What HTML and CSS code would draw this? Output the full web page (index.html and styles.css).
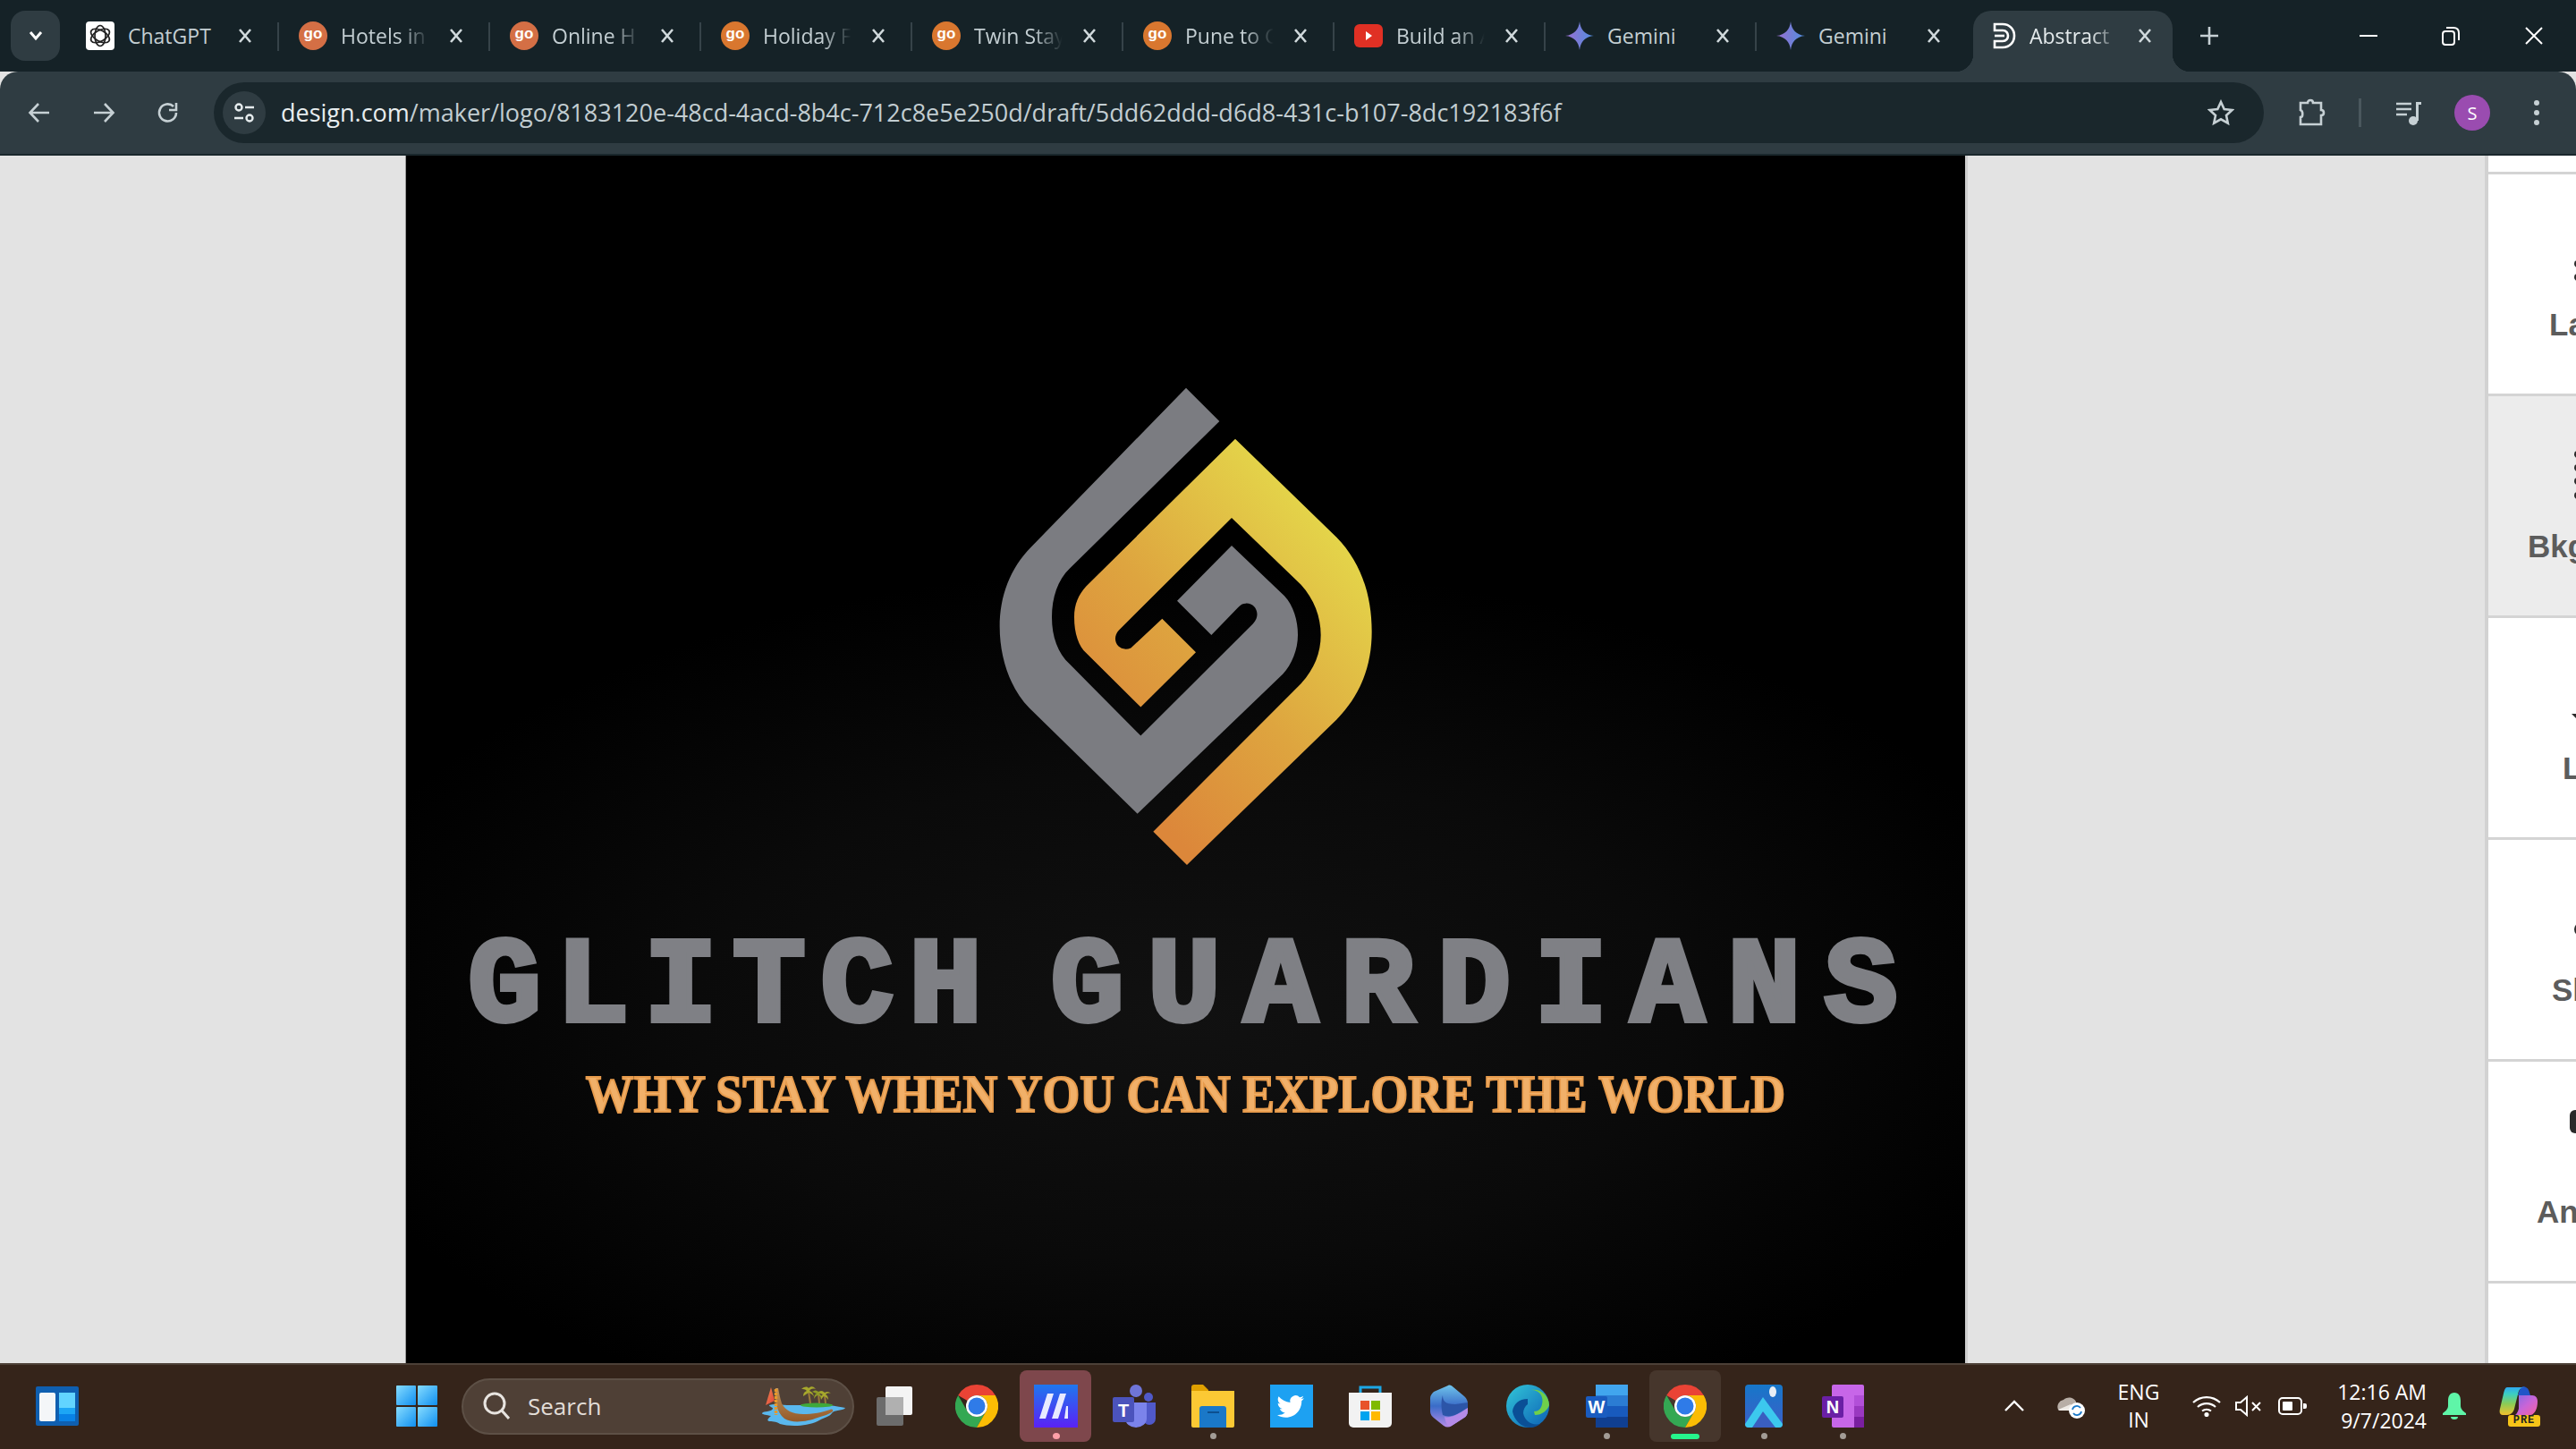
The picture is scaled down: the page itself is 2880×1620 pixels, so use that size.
FILE: index.html
```html
<!DOCTYPE html>
<html lang="en">
<head>
<meta charset="utf-8">
<title>Abstract</title>
<link rel="stylesheet" href="styles.css">
</head>
<body>
<svg class="defs" width="0" height="0">
  <defs>
    <symbol id="chrome" viewBox="0 0 48 48">
      <path fill="#ea4335" d="M24 0A24 24 0 0 1 44.8 12H24a12 12 0 0 0-10.4 6L3.2 12A24 24 0 0 1 24 0z"/>
      <path fill="#34a853" d="M3.2 12A24 24 0 0 0 24 48L34.4 30A12 12 0 0 1 13.6 30z"/>
      <path fill="#fbbc04" d="M44.8 12H24A12 12 0 0 1 34.4 30L24 48A24 24 0 0 0 44.8 12z"/>
      <circle cx="24" cy="24" r="12" fill="#fff"/><circle cx="24" cy="24" r="9.5" fill="#2f7be8"/>
    </symbol>
    <symbol id="gemini" viewBox="0 0 32 32">
      <path fill="url(#gem)" d="M16 0C17 9 22 15 32 16C22 17 17 23 16 32C15 23 10 17 0 16C10 15 15 9 16 0z"/>
    </symbol>
    <symbol id="close" viewBox="0 0 24 24">
      <path d="M6 5l12 14M18 5L6 19" fill="none" stroke="#d0d9dc" stroke-width="2.6"/>
    </symbol>
    <linearGradient id="gem" x1="0" y1="0.5" x2="1" y2="0.5"><stop offset="0" stop-color="#9a6ed0"/><stop offset="1" stop-color="#4f8fe0"/></linearGradient>
    <linearGradient id="gold" gradientUnits="userSpaceOnUse" x1="500" y1="1250" x2="1250" y2="500"><stop offset="0" stop-color="#dc873a"/><stop offset="0.45" stop-color="#dea53f"/><stop offset="1" stop-color="#e4d64a"/></linearGradient>
    <linearGradient id="win" x1="0" y1="0" x2="1" y2="1"><stop offset="0" stop-color="#86dcff"/><stop offset="1" stop-color="#0f8ff0"/></linearGradient>
    <linearGradient id="maker" x1="0" y1="0" x2="0" y2="1"><stop offset="0" stop-color="#1f77ee"/><stop offset="1" stop-color="#5a22f5"/></linearGradient>
    <linearGradient id="edge" x1="0" y1="0" x2="1" y2="1"><stop offset="0" stop-color="#32c7d8"/><stop offset="1" stop-color="#0c5fb5"/></linearGradient>
    <linearGradient id="copi" x1="0" y1="0" x2="0" y2="1"><stop offset="0" stop-color="#2fa8f0"/><stop offset="0.25" stop-color="#3ccfc0"/><stop offset="0.6" stop-color="#8ccc55"/><stop offset="1" stop-color="#f2c02e"/></linearGradient>
    <linearGradient id="copi2" x1="0" y1="0" x2="1" y2="1"><stop offset="0" stop-color="#7a6ae8"/><stop offset="0.5" stop-color="#c865d8"/><stop offset="1" stop-color="#f860a0"/></linearGradient>
    <linearGradient id="bing" x1="0" y1="0" x2="0" y2="1"><stop offset="0" stop-color="#6fc3ea"/><stop offset="0.5" stop-color="#3a6cc8"/><stop offset="1" stop-color="#b58be8"/></linearGradient>
    <linearGradient id="photo" x1="0" y1="0" x2="0" y2="1"><stop offset="0" stop-color="#1677c9"/><stop offset="1" stop-color="#3d5fc8"/></linearGradient>
    <linearGradient id="hull" x1="0" y1="0" x2="0" y2="1"><stop offset="0" stop-color="#c0935a"/><stop offset="1" stop-color="#93592a"/></linearGradient>
    <linearGradient id="flag" x1="0" y1="0" x2="1" y2="1"><stop offset="0" stop-color="#f08a50"/><stop offset="1" stop-color="#e0403a"/></linearGradient>
  </defs>
</svg>

<div class="app">
  <header class="tabstrip">
    <button class="tab-search"><svg width="16" height="12" viewBox="0 0 16 12"><path d="M2 2l6 7 6-7" fill="none" stroke="#fff" stroke-width="3"/></svg></button>
    <div class="tabs">
      <div class="tab sep tab-first">
        <span class="fav fav-white"><svg width="26" height="26" viewBox="0 0 26 26" fill="none" stroke="#222" stroke-width="1.7"><ellipse cx="13" cy="13" rx="6" ry="11.500"/><ellipse cx="13" cy="13" rx="6" ry="11.500" transform="rotate(60 13 13)"/><ellipse cx="13" cy="13" rx="6" ry="11.500" transform="rotate(120 13 13)"/></svg></span>
        <span class="title">ChatGPT</span>
        <svg class="x" width="24" height="24"><use href="#close"/></svg>
      </div>
      <div class="tab sep"><span class="fav go go-a">go</span><span class="title fade">Hotels in</span><svg class="x" width="24" height="24"><use href="#close"/></svg></div>
      <div class="tab sep"><span class="fav go go-a">go</span><span class="title fade">Online H</span><svg class="x" width="24" height="24"><use href="#close"/></svg></div>
      <div class="tab sep"><span class="fav go">go</span><span class="title fade">Holiday F</span><svg class="x" width="24" height="24"><use href="#close"/></svg></div>
      <div class="tab sep"><span class="fav go">go</span><span class="title fade">Twin Stay</span><svg class="x" width="24" height="24"><use href="#close"/></svg></div>
      <div class="tab sep"><span class="fav go">go</span><span class="title fade">Pune to G</span><svg class="x" width="24" height="24"><use href="#close"/></svg></div>
      <div class="tab sep">
        <span class="fav"><svg width="32" height="26" viewBox="0 0 32 26"><rect width="32" height="26" rx="6" fill="#e03024"/><path d="M13 8l7 5-7 5z" fill="#fff"/></svg></span>
        <span class="title fade">Build an A</span><svg class="x" width="24" height="24"><use href="#close"/></svg>
      </div>
      <div class="tab sep"><span class="fav"><svg width="32" height="32"><use href="#gemini"/></svg></span><span class="title">Gemini</span><svg class="x" width="24" height="24"><use href="#close"/></svg></div>
      <div class="tab"><span class="fav"><svg width="32" height="32"><use href="#gemini"/></svg></span><span class="title">Gemini</span><svg class="x" width="24" height="24"><use href="#close"/></svg></div>
      <div class="tab active">
        <span class="fav"><svg width="26" height="30" viewBox="0 0 26 30" fill="none" stroke="#fff" stroke-width="2.600"><path d="M2 2h9c8 0 13 6 13 13s-5 13-13 13H2v-7h9c4 0 6-3 6-6s-2-6-6-6H2z"/><path d="M2 15h11"/></svg></span>
        <span class="title fade">Abstract</span><svg class="x" width="24" height="24"><use href="#close"/></svg>
      </div>
    </div>
    <svg class="newtab" width="24" height="24" viewBox="0 0 24 24"><path d="M12 2v20M2 12h20" stroke="#c6d0d4" stroke-width="2.6"/></svg>
    <div class="winctl">
      <svg width="20" height="4" viewBox="0 0 20 4"><path d="M0 2h20" stroke="#fff" stroke-width="2"/></svg>
      <svg width="22" height="22" viewBox="0 0 22 22" fill="none" stroke="#fff" stroke-width="2"><rect x="2" y="6" width="13" height="15" rx="3"/><path d="M6 2h8c4 0 6 2 6 6v8"/></svg>
      <svg width="22" height="22" viewBox="0 0 22 22"><path d="M2 2l18 18M20 2L2 20" stroke="#fff" stroke-width="2"/></svg>
    </div>
  </header>

  <nav class="toolbar">
    <svg class="nav-i" width="26" height="26" viewBox="0 0 26 26" fill="none" stroke="#c6d0d4" stroke-width="2.6"><path d="M24 13H3M12 3L2.5 13l9.5 10"/></svg>
    <svg class="nav-i" width="26" height="26" viewBox="0 0 26 26" fill="none" stroke="#c6d0d4" stroke-width="2.6"><path d="M2 13h21M14 3l9.500 10L14 23"/></svg>
    <svg class="nav-i" width="26" height="26" viewBox="0 0 26 26" fill="none" stroke="#c6d0d4" stroke-width="2.6"><path d="M22 13a9.500 9.500 0 1 1-3-7"/><path d="M22 2v8h-8" stroke-width="2.6"/></svg>
    <div class="omnibox">
      <span class="site"><svg width="24" height="24" viewBox="0 0 24 24" fill="none" stroke="#e6ecee" stroke-width="2.4"><circle cx="6" cy="6" r="3.500"/><path d="M13 6h10M1 18h10"/><circle cx="18" cy="18" r="3.500"/></svg></span>
      <span class="url"><span class="domain">design.com</span>/maker/logo/8183120e-48cd-4acd-8b4c-712c8e5e250d/draft/5dd62ddd-d6d8-431c-b107-8dc192183f6f</span>
      <svg class="star" width="30" height="30" viewBox="0 0 30 30"><path d="M15 3l3.700 8 8.800 1-6.500 6 1.800 8.700L15 22.300l-7.800 4.400L9 18l-6.500-6 8.800-1z" fill="none" stroke="#c6d0d4" stroke-width="2.600"/></svg>
    </div>
    <div class="tools">
      <svg class="t-ext" width="32" height="32" viewBox="0 0 32 32" fill="none" stroke="#c6d0d4" stroke-width="2.6"><path d="M3 5h8c0-4 6-4 6 0h9v8c4 0 4 6 0 6v10H3v-8c3 0 3-7 0-8z"/></svg>
      <span class="t-sep"></span>
      <svg class="t-med" width="30" height="28" viewBox="0 0 30 28"><path d="M1 4h17M1 10h17M1 16h12" stroke="#c6d0d4" stroke-width="2.6"/><path d="M23 2h6v3h-3v18h-3z" fill="#c6d0d4"/><circle cx="20" cy="23" r="5" fill="#c6d0d4"/></svg>
      <span class="avatar">S</span>
      <svg class="t-more" width="8" height="30" viewBox="0 0 8 30"><circle cx="4" cy="4" r="3" fill="#c6d0d4"/><circle cx="4" cy="15" r="3" fill="#c6d0d4"/><circle cx="4" cy="26" r="3" fill="#c6d0d4"/></svg>
    </div>
  </nav>

  <main class="stage">
    <div class="gutter"></div>
    <section class="canvas">
      <svg class="logo" width="500" height="570" viewBox="0 0 1500 1568" preserveAspectRatio="none">
        <path fill="#7b7c81" d="M735 65L847 168L345 620C305 655 285 710 285 770C285 830 305 880 345 915L583 1135L960 790C990 760 965 725 935 728C925 728 918 732 910 740L820 825L705 720L888 550L1065 705C1095 735 1110 780 1110 825C1110 870 1090 915 1060 945L572 1375L210 1050C145 990 110 895 110 800C110 705 145 620 215 555z"/>
        <path fill="url(#gold)" d="M900 222L1240 525C1320 600 1358 700 1358 815C1358 920 1320 1010 1240 1085L738 1532L625 1430L1120 975C1165 930 1187 880 1187 825C1187 770 1165 715 1120 670L888 465L510 810C480 840 510 880 550 865L655 775L768 878L583 1047L400 880C375 860 360 820 360 770C360 730 375 700 400 675z"/>
      </svg>
      <h1 class="brand"><span class="w-first">GLITCH</span> <span class="w-second">GUARDIANS</span></h1>
      <p class="tagline">WHY STAY WHEN YOU CAN EXPLORE THE WORLD</p>
    </section>
    <div class="gutter gutter-r"></div>
    <aside class="panel">
      <div class="panel-top"></div>
      <div class="prow">
        <svg class="picon" width="98" height="148"><circle cx="100" cy="100" r="4" class="ink"/><circle cx="100" cy="115" r="4" class="ink"/></svg>
        <span class="plabel l-la">La</span>
      </div>
      <div class="prow prow-on">
        <svg class="picon" width="98" height="148"><circle cx="100" cy="65" r="4" class="ink"/><circle cx="100" cy="80" r="4" class="ink"/><circle cx="100" cy="95" r="4" class="ink"/><circle cx="100" cy="111" r="4" class="ink"/></svg>
        <span class="plabel l-bkg">Bkg</span>
      </div>
      <div class="prow">
        <svg class="picon" width="98" height="148"><path d="M93 107h6v6z" class="ink"/></svg>
        <span class="plabel l-l">L</span>
      </div>
      <div class="prow">
        <svg class="picon" width="98" height="148"><circle cx="104" cy="100" r="8" class="ink"/></svg>
        <span class="plabel l-sl">Sl</span>
      </div>
      <div class="prow">
        <svg class="picon" width="98" height="148"><rect x="91" y="54" width="20" height="26" rx="6" class="ink"/></svg>
        <span class="plabel l-an">An</span>
      </div>
    </aside>
  </main>

  <footer class="taskbar">
    <svg class="widgets" width="48" height="44" viewBox="0 0 48 44"><rect width="48" height="44" rx="2" fill="#0f5fb0"/><rect x="4" y="7" width="18" height="32" rx="2" fill="#f4f6f8"/><rect x="26" y="7" width="18" height="20" fill="#62d4ff"/><rect x="26" y="24" width="18" height="8" fill="#1ca6f5"/><rect x="26" y="31" width="18" height="8" fill="#0882e6"/></svg>
    <svg class="winlogo" width="46" height="46" viewBox="0 0 46 46" fill="url(#win)"><rect width="22" height="22" rx="1"/><rect x="24" width="22" height="22" rx="1"/><rect y="24" width="22" height="22" rx="1"/><rect x="24" y="24" width="22" height="22" rx="1"/></svg>
    <div class="search">
      <svg width="30" height="32" viewBox="0 0 30 32" fill="none" stroke="#e8e4e0" stroke-width="3"><circle cx="13" cy="13" r="11"/><path d="M21 21l8 9"/></svg>
      <span class="search-t">Search</span>
      <svg class="boat" width="95" height="50" viewBox="0 0 95 50">
        <path fill="#5ab8ee" d="M8 24C14 22 20 24 28 24H70C78 24 82 25 93 27C92 30 80 29 78 33C76 37 68 38 62 42C50 48 30 48 20 45C16 42 10 42 8 42C4 41 8 38 10 36C4 35 -1 34 0 33C2 30 10 32 12 28C12 26 8 26 8 24z"/>
        <ellipse cx="61" cy="24" rx="18" ry="2.500" fill="#3fa83a"/>
        <path d="M54 22L52 9M64 22L63 11M71 22L70 13" stroke="#9a7a3a" stroke-width="2" fill="none"/>
        <path d="M44 6C48 3 50 3 52 5C55 2 58 3 60 6C56 5 54 6 53 8C56 9 57 11 58 14C55 11 53 10 52 10C50 11 48 13 46 14C46 11 47 9 50 8C48 6 46 6 44 6z" fill="#a7a82c"/>
        <path d="M56 9C59 7 61 7 63 9C66 7 68 8 70 10C67 9 65 10 64 11C66 12 66 14 67 17C64 13 63 13 62 13C60 14 59 15 58 17C58 14 59 12 61 11C59 10 58 10 56 9z" fill="#8f9a26"/>
        <path d="M63 10C66 8 68 8 70 10C73 8 75 9 77 11C74 10 72 11 71 12C73 13 74 15 74 18C72 15 70 14 69 14C68 15 67 16 66 18C65 15 66 13 68 12C66 11 65 11 63 10z" fill="#a7a82c"/>
        <path fill="url(#hull)" d="M15 5C14 18 16 32 25 39C34 45 52 42 62 38C68 36 76 34 79 31C80 29 78 28 76 29C68 32 56 34 46 34C34 34 26 30 22 22C20 16 19 10 18 5z"/>
        <path fill="url(#flag)" d="M10 4L4 24L14 19z"/>
        <path d="M15.500 6V35" stroke="#e8982a" stroke-width="3.500" stroke-dasharray="3 1"/>
      </svg>
    </div>
    <div class="apps">
      <div class="app-slot"><svg width="48" height="44" viewBox="0 0 48 44"><rect y="12" width="30" height="32" rx="2" fill="#6c6c6c"/><rect x="10" width="30" height="32" rx="2" fill="#f4f4f4"/><rect x="10" y="12" width="20" height="20" fill="#b0b0b0"/></svg></div>
      <div class="app-slot"><svg width="48" height="48"><use href="#chrome"/></svg></div>
      <div class="app-slot app-maker">
        <svg width="49" height="48" viewBox="0 0 49 48"><rect width="49" height="48" fill="url(#maker)"/><path d="M6 38L15 10h7L13 38zM20 38L29 10h7L27 38zM34 38L36 24 38 24V38z" fill="#e8eaff"/></svg>
        <i class="pip pip-pink"></i>
      </div>
      <div class="app-slot"><svg width="48" height="48" viewBox="0 0 48 48"><circle cx="26" cy="7" r="7" fill="#6f75d8"/><circle cx="40" cy="14" r="5" fill="#5059c9"/><path d="M34 20h14v18a7 7 0 0 1-14 0z" fill="#5059c9"/><path d="M14 20h24v18a12 10 0 0 1-24 0z" fill="#7b83eb"/><rect y="14" width="24" height="28" rx="2" fill="#4b53bc"/><text x="12" y="36" class="ico-t">T</text></svg></div>
      <div class="app-slot">
        <svg width="48" height="48" viewBox="0 0 48 48"><path d="M0 3a3 3 0 0 1 3-3h10l6 6v20H0z" fill="#e0a000"/><path d="M0 7h48v39a2 2 0 0 1-2 2H2a2 2 0 0 1-2-2z" fill="#fcc934"/><path d="M12 24h24a3 3 0 0 1 3 3v21H9V27a3 3 0 0 1 3-3z" fill="#1a78c8"/><path d="M18 31h13" stroke="#0c4f8f" stroke-width="2"/></svg>
        <i class="pip"></i>
      </div>
      <div class="app-slot"><svg width="48" height="48" viewBox="0 0 48 48"><rect width="48" height="48" fill="#1da1f2"/><path d="M38 15c-1 .6-2.500 1-3.600 1.100 1.300-.8 2.300-2 2.700-3.400-1.200.7-2.600 1.200-4 1.500a6.200 6.200 0 0 0-10.600 5.700c-5.200-.3-9.800-2.800-12.900-6.600-1.700 2.900-.8 6.500 1.900 8.300-1 0-2-.3-2.800-.8 0 3 2.100 5.600 5 6.200-.9.200-1.900.3-2.800.1.800 2.500 3.100 4.300 5.800 4.300A12.500 12.500 0 0 1 8 34c2.800 1.800 6 2.800 9.500 2.800 11.600 0 18-9.800 17.700-18.500 1.200-.9 2.200-2 2.800-3.300z" fill="#fff"/></svg></div>
      <div class="app-slot"><svg width="48" height="48" viewBox="0 0 48 48"><path d="M13 9V3h22v6" fill="none" stroke="#1ca7e6" stroke-width="3"/><path d="M0 9h48v34a5 5 0 0 1-5 5H5a5 5 0 0 1-5-5z" fill="#f2f2f2"/><rect x="13" y="18" width="10" height="10" fill="#e8532a"/><rect x="25" y="18" width="10" height="10" fill="#7fba00"/><rect x="13" y="30" width="10" height="10" fill="#00a4ef"/><rect x="25" y="30" width="10" height="10" fill="#ffb900"/></svg></div>
      <div class="app-slot"><svg width="42" height="48" viewBox="0 0 42 48"><path d="M20 1C22 0 24 1 26 3L38 13C41 16 42 18 42 22V30C42 33 40 36 38 37L24 46C21 48 18 48 15 46L5 38C2 36 0 33 0 30V15C0 12 2 10 4 8z" fill="url(#bing)"/><path d="M14 12C14 18 16 22 28 22L42 20V26L30 33C24 36 18 36 14 34C12 26 12 18 14 12z" fill="#2c55a8"/><path d="M16 36C22 38 30 34 42 26V30C42 33 40 36 38 37L24 46C21 48 18 46 16 36z" fill="#b58be8"/></svg></div>
      <div class="app-slot"><svg width="48" height="48" viewBox="0 0 48 48"><circle cx="24" cy="24" r="24" fill="url(#edge)"/><path d="M24 16c-10 0-16 6-17 14 2 10 10 18 20 18 5 0 8-2 11-4-10 2-17-3-19-12 0-4 2-8 5-10z" fill="#0a4f96"/><path d="M32 34c8 0 14-5 16-11C48 12 38 4 28 6c10 0 14 8 12 16-1 5-4 8-9 8z" fill="#6fd04a"/></svg></div>
      <div class="app-slot">
        <svg width="47" height="48" viewBox="0 0 47 48"><rect x="11" width="36" height="48" rx="2" fill="#2b7cd3"/><rect x="11" width="36" height="12" fill="#41a5ee"/><rect x="11" y="24" width="36" height="12" fill="#185abd"/><rect x="11" y="36" width="36" height="12" fill="#103f91"/><rect y="13" width="24" height="24" rx="2" fill="#1a5cc0"/><text x="12" y="32" class="ico-t">W</text></svg>
        <i class="pip"></i>
      </div>
      <div class="app-slot app-cur"><svg width="48" height="48"><use href="#chrome"/></svg><i class="pip pip-green"></i></div>
      <div class="app-slot">
        <svg width="42" height="48" viewBox="0 0 42 48"><rect width="42" height="48" rx="4" fill="url(#photo)"/><path d="M0 44L20 14l22 30v0a4 4 0 0 1-4 4H4a4 4 0 0 1-4-4z" fill="#3cc8ee"/><path d="M20 30L8 48h26z" fill="#3a5ec0"/><ellipse cx="31" cy="8" rx="4" ry="6" fill="#e8eef5"/></svg>
        <i class="pip"></i>
      </div>
      <div class="app-slot">
        <svg width="47" height="48" viewBox="0 0 47 48"><rect x="11" width="36" height="48" rx="2" fill="#c766e8"/><rect x="36" y="12" width="11" height="12" fill="#b24fd8"/><rect x="36" y="24" width="11" height="12" fill="#9a38c0"/><rect x="36" y="36" width="11" height="12" fill="#7a1fa0"/><rect y="13" width="24" height="24" rx="2" fill="#6a1fa5"/><text x="12" y="32" class="ico-t">N</text></svg>
        <i class="pip"></i>
      </div>
    </div>
    <div class="tray">
      <svg class="tr-chev" width="24" height="14" viewBox="0 0 24 14"><path d="M2 12L12 2l10 10" fill="none" stroke="#fff" stroke-width="2.400"/></svg>
      <svg class="tr-cloud" width="32" height="28" viewBox="0 0 32 28"><path d="M2 18a8 8 0 0 1 6-11 9 9 0 0 1 14 2v10H5a4 4 0 0 1-3-1z" fill="#b8aea6"/><path d="M2 18l14-6 6 7H5a4 4 0 0 1-3-1z" fill="#efebe6"/><circle cx="23" cy="19" r="9" fill="#fff"/><path d="M18 18a5 5 0 0 1 9-2M28 20a5 5 0 0 1-9 2" fill="none" stroke="#1a78c8" stroke-width="1.800"/></svg>
      <div class="tr-lang"><span>ENG</span><span>IN</span></div>
      <svg class="tr-wifi" width="32" height="24" viewBox="0 0 32 24" fill="none" stroke="#fff" stroke-width="2.200"><path d="M1 8a22 22 0 0 1 30 0M6 13a15 15 0 0 1 20 0M11 17.500a8 8 0 0 1 10 0"/><circle cx="16" cy="21.500" r="1.500" fill="#fff"/></svg>
      <svg class="tr-mute" width="30" height="24" viewBox="0 0 30 24" fill="none" stroke="#fff" stroke-width="2"><path d="M1 8h5l7-6v20l-7-6H1zM19 8l9 9M28 8l-9 9"/></svg>
      <svg class="tr-bat" width="32" height="20" viewBox="0 0 32 20"><rect x="1" y="1" width="25" height="18" rx="4" fill="none" stroke="#fff" stroke-width="2"/><rect x="5" y="5" width="11" height="10" rx="1" fill="#fff"/><path d="M28 7h2a2 2 0 0 1 2 2v2a2 2 0 0 1-2 2h-2z" fill="#fff"/></svg>
      <div class="tr-clock"><span>12:16 AM</span><span>9/7/2024</span></div>
      <svg class="tr-bell" width="26" height="30" viewBox="0 0 26 30" fill="#5ff5a8"><path d="M13 0c-5 0-7 4-7 9v6c0 3-3 6-6 8v2h26v-2c-3-2-6-5-6-8V9c0-5-2-9-7-9z"/><path d="M9 27h8a4 3 0 0 1-8 0z"/></svg>
      <div class="tr-copilot">
        <svg width="44" height="34" viewBox="0 0 44 34"><path d="M26 1C30 1 33 3 34 8L35 11H21C23 5 24 1 28 1z" fill="#1f55c8"/><path d="M9 2H28C24 2 22 5 21 10L17 26C16 30 13 33 9 33H4C1 33 0 30 1 26L5 9C6 5 7 2 9 2z" fill="url(#copi)"/><path d="M22 11H37C41 11 43 14 43 18C43 26 40 33 33 34H16C19 33 21 30 22 26z" fill="url(#copi2)"/></svg>
        <span class="pre">PRE</span>
      </div>
    </div>
  </footer>
</div>
</body>
</html>
```
FILE: styles.css
```css
* { box-sizing: border-box; }
html, body { margin: 0; padding: 0; width: 2880px; height: 1620px; overflow: hidden; background: #e3e3e3; }
body { font-family: "Open Sans", "Noto Sans", sans-serif; }
.defs { position: absolute; }
.app { width: 2880px; height: 1620px; display: flex; flex-direction: column; }

/* tab strip */
.tabstrip { height: 80px; background: #152227; display: flex; align-items: flex-start; flex: none; position: relative; }
.tab-search { width: 55px; height: 56px; margin: 12px 9px 0 12px; border: 0; border-radius: 16px; background: #2f3c42; display: flex; align-items: center; justify-content: center; padding: 0; }
.tabs { display: flex; height: 80px; }
.tab { width: 236px; height: 80px; padding: 0 0 0 22px; display: flex; align-items: center; position: relative; flex: none; }
.tab.sep::after { content: ""; position: absolute; right: 0; top: 25px; width: 2px; height: 32px; background: #364349; }
.tab-first { padding-left: 20px; }
.tab-first .title { width: 105px; }
.fav { width: 32px; height: 32px; flex: none; display: flex; align-items: center; justify-content: center; margin-right: 15px; }
.fav-white { background: #fff; border-radius: 4px; }
.go { border-radius: 50%; background: #d9772f; color: #fff; font: 700 17px "Liberation Sans", sans-serif; line-height: 28px; padding-bottom: 4px; }
.go-a { background: #d46f45; }
.title { width: 103px; font-size: 23px; line-height: 34px; color: #c3ced2; white-space: nowrap; overflow: hidden; flex: none; }
.title.fade { -webkit-mask-image: linear-gradient(90deg, #000 65%, transparent 96%); mask-image: linear-gradient(90deg, #000 65%, transparent 96%); }
.x { flex: none; margin-left: 14px; }
.tab.active { background: #2f3c42; width: 223px; margin-left: 6px; padding-left: 19px; height: 68px; margin-top: 12px; border-radius: 20px 20px 0 0; padding-bottom: 12px; }
.tab.active::before, .tab.active::after { content: ""; position: absolute; bottom: 0; width: 20px; height: 20px; }
.tab.active::before { left: -20px; background: radial-gradient(circle at 0 0, #152227 20px, #2f3c42 20.5px); }
.tab.active::after { right: -20px; background: radial-gradient(circle at 100% 0, #152227 20px, #2f3c42 20.5px); }
.tab.active .fav { margin-right: 12px; }
.tab.active .title { color: #e4eaec; width: 105px; }
.tab.active .x { margin-left: 12px; }
.newtab { margin: 28px 0 0 29px; flex: none; }
.winctl { margin-left: auto; display: flex; align-items: center; height: 80px; padding-right: 36px; gap: 71px; }

/* toolbar */
.toolbar { height: 92px; background: #2f3c42; border-radius: 20px 20px 0 0; display: flex; align-items: center; padding-left: 31px; flex: none; }
.nav-i { flex: none; margin-right: 46px; }
.nav-i:nth-child(3) { margin-right: 0; }
.omnibox { width: 2292px; height: 68px; margin-left: 38px; background: #1a272c; border-radius: 34px; display: flex; align-items: center; padding: 0 33px 0 10px; flex: none; }
.site { width: 48px; height: 48px; border-radius: 50%; background: #2f3c42; display: flex; align-items: center; justify-content: center; flex: none; }
.url { margin-left: 17px; font-size: 27px; color: #c2cdd1; white-space: nowrap; line-height: 36px; }
.domain { color: #e8edef; }
.star { margin-left: auto; flex: none; }
.tools { display: flex; align-items: center; flex: none; }
.t-ext { margin-left: 38px; }
.t-sep { width: 3px; height: 32px; background: #4a575d; margin-left: 36px; }
.t-med { margin-left: 38px; }
.avatar { width: 40px; height: 40px; border-radius: 50%; background: #9a4cb0; color: #fff; font-size: 20px; display: flex; align-items: center; justify-content: center; margin-left: 36px; }
.t-more { margin-left: 48px; }

/* stage */
.stage { height: 1352px; flex: none; display: grid; grid-template-columns: 453px 1744px 585px 98px; background: #e3e3e3; border-top: 2px solid #1a272c; overflow: hidden; }
.canvas { background: radial-gradient(ellipse 1000px 500px at 50% 960px, #111 0%, #0a0a0a 55%, #000 100%); display: flex; flex-direction: column; align-items: center; padding-top: 236px; border-left: 1px solid #999; }
.logo { display: block; margin-left: 10px; flex: none; }
.brand { margin: 65px 6px 0 0; display: flex; gap: 60px; font: 700 136px/120px "Liberation Mono", monospace; white-space: nowrap; color: #7f8085; -webkit-text-stroke: 6px #7f8085; }
.w-first { letter-spacing: 17px; }
.w-second { letter-spacing: 26.500px; margin-right: -26px; }
.tagline { margin: 28px 0 0; font: 700 60px/60px "Liberation Serif", serif; letter-spacing: 0; white-space: nowrap; color: #f1b069; -webkit-text-stroke: 2px #e79b4c; transform: scaleX(0.895); }
.gutter-r { border-left: 3px solid #cfcfcf; border-right: 4px solid #d2d2d2; }

/* side panel */
.panel { background: #fff; overflow: hidden; }
.panel-top { height: 21px; border-bottom: 3px solid #d4d4d4; }
.prow { height: 248px; border-bottom: 3px solid #d4d4d4; display: flex; flex-direction: column; }
.prow-on { background: #ececec; }
.picon { display: block; flex: none; }
.ink { fill: #2a2a2a; }
.plabel { font: 700 35px/40px "Liberation Sans", sans-serif; color: #5c5c5c; white-space: nowrap; }
.l-la { margin-left: 68px; }
.l-bkg { margin-left: 44px; }
.l-l { margin-left: 83px; }
.l-sl { margin-left: 71px; }
.l-an { margin-left: 54px; }

/* taskbar */
.taskbar { height: 96px; flex: none; background: #35241a; border-top: 2px solid #4c4037; display: flex; align-items: center; position: relative; padding: 0 0 2px 40px; }
.widgets { flex: none; }
.winlogo { flex: none; margin-left: 355px; }
.search { width: 439px; height: 63px; margin-left: 27px; border-radius: 32px; background: #4f4036; border: 2px solid #5d5046; display: flex; align-items: center; padding: 0 6px 0 22px; flex: none; }
.search-t { font-size: 26px; color: #e2ddd8; margin-left: 20px; }
.boat { margin-left: auto; }
.apps { display: flex; margin-left: 5px; flex: none; }
.app-slot { width: 88px; height: 80px; display: flex; align-items: center; justify-content: center; position: relative; border-radius: 8px; }
.app-maker { background: #7e474c; width: 80px; margin: 0 4px; }
.app-cur { background: #46362c; width: 80px; margin: 0 4px; }
.pip { position: absolute; left: 50%; bottom: 3px; width: 7px; height: 7px; margin-left: -3px; border-radius: 50%; background: #a39c96; }
.pip-pink { background: #ff9fa8; width: 8px; }
.pip-green { background: #26f58c; width: 32px; height: 6px; margin-left: -16px; border-radius: 3px; }
.ico-t { font: 700 20px "Liberation Sans", sans-serif; fill: #fff; text-anchor: middle; }
.tray { position: relative; display: flex; align-items: center; flex: none; height: 94px; }
.tr-chev { margin-left: 136px; }
.tr-cloud { margin-left: 35px; }
.tr-lang { width: 60px; margin-left: 30px; display: flex; flex-direction: column; align-items: center; color: #fff; font-size: 23px; line-height: 31px; }
.tr-wifi { margin-left: 30px; }
.tr-mute { margin-left: 16px; }
.tr-bat { margin-left: 18px; }
.tr-clock { width: 110px; margin-left: 24px; display: flex; flex-direction: column; align-items: flex-end; color: #fff; font-size: 23px; line-height: 32px; white-space: nowrap; }
.tr-bell { margin-left: 18px; }
.tr-copilot { position: relative; width: 46px; height: 46px; margin-left: 37px; }
.pre { position: absolute; right: 0; bottom: 0; width: 36px; height: 13px; background: #f7c518; border-radius: 3px; font: 700 12px/13px "Liberation Mono", monospace; letter-spacing: 1px; color: #222; text-align: center; }
```
